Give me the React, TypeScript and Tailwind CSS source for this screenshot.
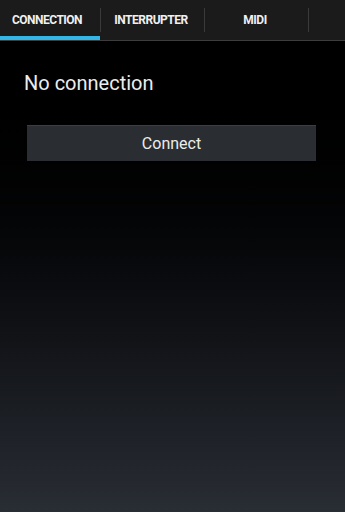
const TABS = ['CONNECTION', 'INTERRUPTER', 'MIDI'];

export default function App() {
  return (
    <div
      className="w-[345px] h-[512px] flex flex-col overflow-hidden"
      style={{ fontFamily: 'Roboto, "Liberation Sans", sans-serif' }}
    >
      {/* Tabs */}
      <div className="h-[41px] bg-[#1b1b1b] border-b border-[#3d3d3d] flex shrink-0">
        {TABS.map((t, i) => (
          <div key={t} className="flex items-stretch">
            <div className="relative w-[100px] pr-[6px] flex items-center justify-center">
              <span className="text-[12px] font-bold text-[#f0f0f0] tracking-[-0.5px] mt-[-1px]">{t}</span>
              {i === 0 && <div className="absolute left-0 right-0 bottom-0 h-[4px] bg-[#33b5e5]" />}
            </div>
            <div className="w-[1px] my-[8px] bg-[#3a3a3a]" />
            <div className="w-[3px]" />
          </div>
        ))}
      </div>

      {/* Body */}
      <main className="flex-1 bg-gradient-to-b from-[#000000] to-[#292d34] px-[24px] pt-[30px]">
        <p className="text-[20px] text-[#ececec] leading-[24px]">No connection</p>
        <button className="mt-[30px] ml-[3px] w-[289px] h-[36px] bg-[#2a2e32] border-t border-[#3b3f43] shadow-[0_1px_1px_rgba(0,0,0,0.6)] text-[16px] text-[#ececec]">
          Connect
        </button>
      </main>
    </div>
  );
}
